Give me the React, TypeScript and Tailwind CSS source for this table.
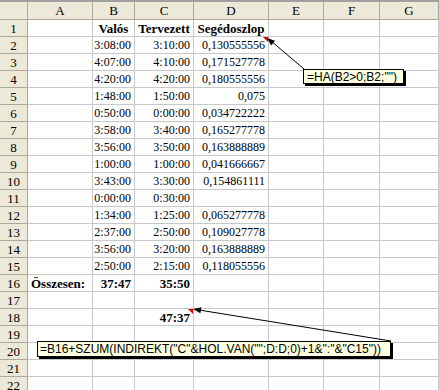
const COLS = ["A", "B", "C", "D", "E", "F", "G"]

type Cell = { v: string; bold?: boolean; align?: "l" | "c" | "r" }

const ROWS: Record<number, (Cell | null)[]> = {
  1: [null, { v: "Valós", bold: true, align: "c" }, { v: "Tervezett", bold: true, align: "c" }, { v: "Segédoszlop", bold: true, align: "c" }],
  2: [null, { v: "3:08:00" }, { v: "3:10:00" }, { v: "0,130555556" }],
  3: [null, { v: "4:07:00" }, { v: "4:10:00" }, { v: "0,171527778" }],
  4: [null, { v: "4:20:00" }, { v: "4:20:00" }, { v: "0,180555556" }],
  5: [null, { v: "1:48:00" }, { v: "1:50:00" }, { v: "0,075" }],
  6: [null, { v: "0:50:00" }, { v: "0:00:00" }, { v: "0,034722222" }],
  7: [null, { v: "3:58:00" }, { v: "3:40:00" }, { v: "0,165277778" }],
  8: [null, { v: "3:56:00" }, { v: "3:50:00" }, { v: "0,163888889" }],
  9: [null, { v: "1:00:00" }, { v: "1:00:00" }, { v: "0,041666667" }],
  10: [null, { v: "3:43:00" }, { v: "3:30:00" }, { v: "0,154861111" }],
  11: [null, { v: "0:00:00" }, { v: "0:30:00" }],
  12: [null, { v: "1:34:00" }, { v: "1:25:00" }, { v: "0,065277778" }],
  13: [null, { v: "2:37:00" }, { v: "2:50:00" }, { v: "0,109027778" }],
  14: [null, { v: "3:56:00" }, { v: "3:20:00" }, { v: "0,163888889" }],
  15: [null, { v: "2:50:00" }, { v: "2:15:00" }, { v: "0,118055556" }],
  16: [{ v: "Összesen:", bold: true, align: "l" }, { v: "37:47", bold: true }, { v: "35:50", bold: true }],
  18: [null, null, { v: "47:37", bold: true }],
}

const GRID = "grid grid-cols-[28px_65px_42px_59px_75px_55px_56px_1fr]"

function DataCell({ cell }: { cell: Cell | null | undefined }) {
  const align = cell?.align ?? "r"
  return (
    <div
      className={
        "flex items-center overflow-visible whitespace-nowrap border-r border-[#c8c8c8] " +
        (align === "r" ? "justify-end pr-[3px] " : align === "c" ? "justify-center " : "justify-start pl-[3px] ") +
        (cell?.bold ? "font-bold text-[13px]" : "text-[12px]")
      }
    >
      {cell?.v}
    </div>
  )
}

export default function App() {
  const rowNums = Array.from({ length: 22 }, (_, i) => i + 1)
  return (
    <div className="relative w-[439px] h-[390px] overflow-hidden bg-white font-['Liberation_Serif',serif] text-black">
      {/* Column headers */}
      <div className={GRID + " h-[20px] border-t-2 border-[#a0a0a0] bg-[#ece9d8]"}>
        <div className="border-r border-b border-[#aca899]" />
        {COLS.map((c) => (
          <div key={c} className="flex items-center justify-center border-r border-b border-[#aca899] text-[13px] leading-none">
            {c}
          </div>
        ))}
      </div>

      {/* Rows */}
      {rowNums.map((n) => {
        const cells = ROWS[n] ?? []
        return (
          <div key={n} className={GRID + " h-[17px] border-b border-[#c8c8c8] leading-none"}>
            <div className="-mb-px flex items-center justify-center border-r border-b border-[#aca899] bg-[#ece9d8] text-[13px]">
              {n}
            </div>
            {COLS.map((c, i) => (
              <DataCell key={c} cell={cells[i]} />
            ))}
          </div>
        )
      })}

      {/* Comment arrows and indicators */}
      <svg className="pointer-events-none absolute inset-0" width="439" height="390" viewBox="0 0 439 390">
        <polygon points="263,37 268,37 268,42" fill="#e00000" />
        <polygon points="188,309 193,309 193,314" fill="#e00000" />
        <line x1="271" y1="41" x2="304" y2="69" stroke="#000" strokeWidth="1" />
        <polygon points="267,38 271.2,45.4 275,40.8" fill="#000" />
        <line x1="199" y1="310" x2="391" y2="341" stroke="#000" strokeWidth="1" />
        <polygon points="193,309 200.4,313.2 201.4,307.3" fill="#000" />
      </svg>

      {/* Comment boxes */}
      <div className="absolute left-[303px] top-[69px] flex h-[15px] w-[101px] items-center border border-black bg-[#ffffe1] px-[3px] font-['Liberation_Sans',sans-serif] text-[12px] leading-none whitespace-nowrap shadow-[2px_2px_0_#000]">
        =HA(B2&gt;0;B2;"")
      </div>
      <div className="absolute left-[37px] top-[341px] flex h-[16px] w-[354px] items-center border border-black bg-[#ffffe1] px-[2px] font-['Liberation_Sans',sans-serif] text-[12px] leading-none whitespace-nowrap shadow-[2px_2px_0_#000]">
        =B16+SZUM(INDIREKT("C"&amp;HOL.VAN("";D:D;0)+1&amp;":"&amp;"C15"))
      </div>
    </div>
  )
}
